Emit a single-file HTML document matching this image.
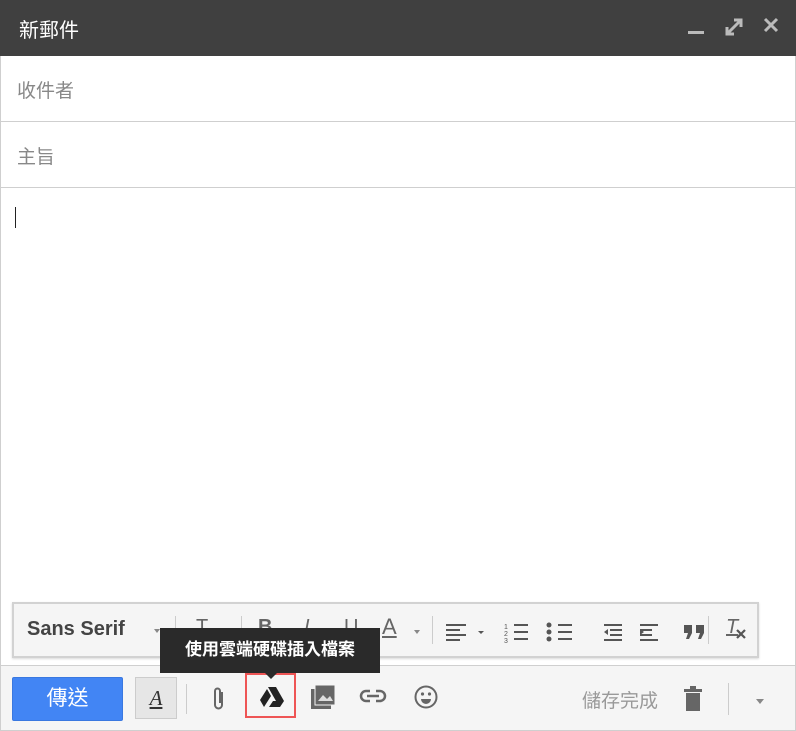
<!DOCTYPE html>
<html><head><meta charset="utf-8"><style>
*{margin:0;padding:0;box-sizing:border-box}
body{width:796px;height:731px;background:#fff;font-family:"Liberation Sans","Noto Sans CJK TC",sans-serif;position:relative;overflow:hidden}
.hdr{position:absolute;left:0;top:0;width:796px;height:56px;background:#404040;color:#fff;font-size:20px}
.hdr span{position:absolute;left:19px;top:14px}
.frame{position:absolute;left:0;top:56px;width:796px;height:675px;border:1px solid #cfcfcf;border-top:none}
.field{position:absolute;left:1px;width:794px;height:66px;border-bottom:1px solid #cfcfcf;color:#888;font-size:19px;padding:20px 0 0 16px}
.caret{position:absolute;left:15px;top:207px;width:1px;height:21px;background:#222}
.fmt{position:absolute;left:12px;top:602px;width:747px;height:56px;border:2px solid #d2d2d2;background:#f5f5f5;box-shadow:0 1px 2px rgba(0,0,0,.15)}
.bot{position:absolute;left:1px;top:665px;width:794px;height:65px;background:#f5f5f5;border-top:1px solid #cfcfcf}
.send{position:absolute;left:12px;top:677px;width:111px;height:44px;background:#4285f4;border:1px solid #3a78e0;border-radius:2px;color:#fff;font-size:21px;text-align:center;line-height:42px}
.tip{position:absolute;left:160px;top:628px;width:220px;height:45px;background:#2a2a2a;color:#fff;font-size:17px;font-weight:bold;line-height:43px;text-align:center}
.sep{position:absolute;width:1px;background:#ccc}
.g{position:absolute;color:#666}
.dd{position:absolute;border:3px solid transparent;border-top:4px solid #888}
</style></head><body>
<div class="hdr"><span>新郵件</span>
<div style="position:absolute;left:688px;top:31px;width:16px;height:3px;background:#bbb"></div>
<svg style="position:absolute;left:724px;top:17px" width="20" height="20" viewBox="0 0 20 20"><path d="M3 17L17 3M10 3h7v7M3 10v7h7" stroke="#bbb" stroke-width="3" fill="none"/></svg>
<svg style="position:absolute;left:763px;top:17px" width="16" height="16" viewBox="0 0 16 16"><path d="M2 2L14 14M14 2L2 14" stroke="#bbb" stroke-width="3"/></svg>
</div>
<div class="frame"></div>
<div class="field" style="top:56px">收件者</div>
<div class="field" style="top:122px">主旨</div>
<div class="caret"></div>
<div class="fmt">
<div style="position:absolute;left:13px;top:14px;font-size:20px;font-weight:bold;color:#444">Sans Serif</div>
<div class="dd" style="left:140px;top:25px"></div>
<div class="sep" style="left:161px;top:12px;height:28px"></div>
<div class="g" style="left:182px;top:12px;font-size:20px">T</div>
<div class="sep" style="left:227px;top:12px;height:28px"></div>
<div class="g" style="left:244px;top:12px;font-size:20px;font-weight:bold">B</div>
<div class="g" style="left:290px;top:12px;font-size:20px;font-style:italic">I</div>
<div class="g" style="left:330px;top:12px;font-size:20px;text-decoration:underline">U</div>
<div class="g" style="left:368px;top:10px;font-size:22px;text-decoration:underline">A</div>
<div class="dd" style="left:400px;top:26px"></div>
<div class="sep" style="left:418px;top:12px;height:28px"></div>
<svg style="position:absolute;left:432px;top:18px" width="300" height="22" viewBox="0 0 300 22"><g stroke="#555" stroke-width="2" fill="none"><path d="M0 3h20M0 8h14M0 13h20M0 18h14"/><path d="M68 3h14M68 10h14M68 17h14M112 3h14M112 10h14M112 17h14M158 3h18M164 8h12M164 13h12M158 18h18M194 3h18M194 8h12M194 13h12M194 18h18"/></g><g fill="#555"><text x="58" y="7" font-size="7" font-family="Liberation Sans">1</text><text x="58" y="14" font-size="7" font-family="Liberation Sans">2</text><text x="58" y="21" font-size="7" font-family="Liberation Sans">3</text><circle cx="103" cy="3" r="2.5"/><circle cx="103" cy="10" r="2.5"/><circle cx="103" cy="17" r="2.5"/><path d="M162 7v6l-4-3zM194 7v6l4-3z"/><path d="M238 3h8v8l-3 6h-3l2-6h-4zM250 3h8v8l-3 6h-3l2-6h-4z"/><path d="M32 9h6l-3 3z"/></g></svg>
<div class="sep" style="left:694px;top:12px;height:28px"></div>
<div class="g" style="left:712px;top:12px;font-size:20px;font-style:italic;text-decoration:underline">T</div>
<svg style="position:absolute;left:721px;top:24px" width="12" height="12" viewBox="0 0 12 12"><path d="M2 2l8 8M10 2l-8 8" stroke="#555" stroke-width="2.2"/></svg>
</div>
<div class="bot"></div>
<div class="send">傳送</div>
<div style="position:absolute;left:135px;top:677px;width:42px;height:42px;border:1px solid #ccc;background:#e6e6e6;font-family:'Liberation Serif';font-style:italic;font-size:21px;text-align:center;line-height:40px;color:#333;text-decoration:underline">A</div>
<div class="sep" style="left:186px;top:684px;height:30px"></div>
<svg style="position:absolute;left:211px;top:686px" width="16" height="26" viewBox="0 0 16 26"><path d="M11 6v13a3.5 3.5 0 0 1-7 0V5a2.5 2.5 0 0 1 5 0v12" stroke="#666" stroke-width="2" fill="none"/></svg>
<div style="position:absolute;left:245px;top:673px;width:51px;height:45px;border:2px solid #e55;"></div>
<svg style="position:absolute;left:259px;top:686px" width="26" height="22" viewBox="0 0 26 22"><path d="M9 1h8l8 14h-8zM8 3l4 7-7 11-4-7zM10 21l4-6h11l-4 6z" fill="#222"/></svg>
<svg style="position:absolute;left:310px;top:684px" width="26" height="26" viewBox="0 0 26 26"><rect x="1" y="5" width="20" height="20" fill="#666"/><rect x="5" y="1" width="20" height="20" fill="#666" stroke="#f5f5f5" stroke-width="1"/><path d="M8 17l5-6 4 4 3-3 3 5z" fill="#ddd"/></svg>
<svg style="position:absolute;left:359px;top:689px" width="28" height="14" viewBox="0 0 28 14"><path d="M11 2H7a5 5 0 0 0 0 10h4M17 2h4a5 5 0 0 1 0 10h-4M8 7h12" stroke="#666" stroke-width="2.5" fill="none"/></svg>
<svg style="position:absolute;left:414px;top:685px" width="24" height="24" viewBox="0 0 24 24"><circle cx="12" cy="12" r="10.5" stroke="#666" stroke-width="2" fill="none"/><circle cx="8.5" cy="9" r="1.6" fill="#666"/><circle cx="15.5" cy="9" r="1.6" fill="#666"/><path d="M7 14h10a5 5 0 0 1-10 0z" fill="#666"/></svg>
<div style="position:absolute;left:582px;top:686px;font-size:19px;color:#999">儲存完成</div>
<svg style="position:absolute;left:683px;top:686px" width="20" height="26" viewBox="0 0 20 26"><rect x="1" y="3" width="18" height="3" fill="#666"/><rect x="7" y="0" width="6" height="3" fill="#666"/><rect x="3" y="7" width="14" height="18" fill="#666"/></svg>
<div class="sep" style="left:728px;top:683px;height:32px"></div>
<div style="position:absolute;left:756px;top:699px;border:4px solid transparent;border-top:5px solid #888"></div>
<div class="tip">使用雲端硬碟插入檔案</div>
<div style="position:absolute;left:265px;top:673px;border:6px solid transparent;border-top:6px solid #2a2a2a"></div>
</body></html>
